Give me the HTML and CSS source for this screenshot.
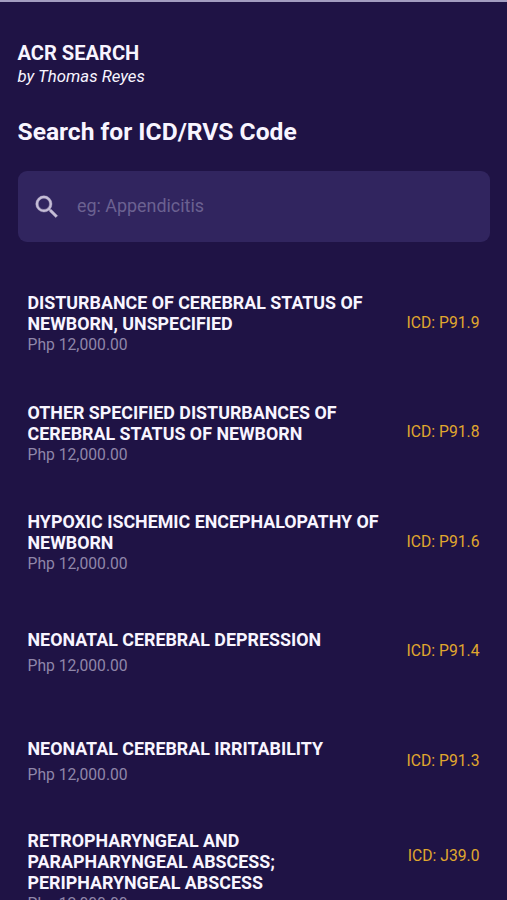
FILE: index.html
```html
<!DOCTYPE html>
<html lang="en">

<head>
    <meta charset="UTF-8" />
    <meta name="viewport" content="width=device-width, initial-scale=1" />
    <title>ACR Search</title>
    <link rel="stylesheet" href="styles.css">
</head>

<body>
    <header>
        <h1>ACR SEARCH</h1>
        <p class="author">by Thomas Reyes</p>
        <h2>Search for ICD/RVS Code</h2>
    </header>

    <form class="search-box">
        <svg class="search-icon" viewBox="0 0 24 24">
            <path d="M15.5 14h-.79l-.28-.27A6.47 6.47 0 0 0 16 9.5 6.5 6.5 0 1 0 9.5 16c1.61 0 3.09-.59 4.23-1.57l.27.28v.79l5 4.99L20.49 19l-4.99-5zm-6 0C7.01 14 5 11.99 5 9.5S7.01 5 9.5 5 14 7.01 14 9.5 11.99 14 9.5 14z" />
        </svg>
        <input type="text" name="search" placeholder="eg: Appendicitis" />
    </form>

    <ul class="results">
        <li class="item">
            <div class="info">
                <h3>DISTURBANCE OF CEREBRAL STATUS OF<br>NEWBORN, UNSPECIFIED</h3>
                <p>Php 12,000.00</p>
            </div>
            <span class="code">ICD: P91.9</span>
        </li>
        <li class="item">
            <div class="info">
                <h3>OTHER SPECIFIED DISTURBANCES OF<br>CEREBRAL STATUS OF NEWBORN</h3>
                <p>Php 12,000.00</p>
            </div>
            <span class="code">ICD: P91.8</span>
        </li>
        <li class="item">
            <div class="info">
                <h3>HYPOXIC ISCHEMIC ENCEPHALOPATHY OF<br>NEWBORN</h3>
                <p>Php 12,000.00</p>
            </div>
            <span class="code">ICD: P91.6</span>
        </li>
        <li class="item single">
            <div class="info">
                <h3>NEONATAL CEREBRAL DEPRESSION</h3>
                <p>Php 12,000.00</p>
            </div>
            <span class="code">ICD: P91.4</span>
        </li>
        <li class="item single">
            <div class="info">
                <h3>NEONATAL CEREBRAL IRRITABILITY</h3>
                <p>Php 12,000.00</p>
            </div>
            <span class="code">ICD: P91.3</span>
        </li>
        <li class="item tall">
            <div class="info">
                <h3>RETROPHARYNGEAL AND<br>PARAPHARYNGEAL ABSCESS;<br>PERIPHARYNGEAL ABSCESS</h3>
                <p>Php 12,000.00</p>
            </div>
            <span class="code">ICD: J39.0</span>
        </li>
    </ul>
</body>

</html>
```

FILE: styles.css
```css
* {
    box-sizing: border-box;
    margin: 0;
    padding: 0;
}

html {
    background-color: #1f1345;
}

body {
    height: 900px;
    overflow: hidden;
    padding: 40px 17px 0 17.5px;
    border-top: 2px solid #a39dc0;
    background-color: #1f1345;
    color: #f8f5ff;
    font-family: Roboto, sans-serif;
}

h1 {
    font-size: 20.1px;
    line-height: 23px;
    font-weight: 700;
}

.author {
    font-size: 16.8px;
    line-height: 22px;
    font-style: italic;
}

h2 {
    margin-top: 29px;
    font-size: 24.6px;
    line-height: 32px;
    font-weight: 700;
}

.search-box {
    display: flex;
    align-items: center;
    height: 71px;
    margin-top: 23px;
    padding: 0 14px;
    border-radius: 9px;
    background-color: #31255f;
}

.search-icon {
    width: 30px;
    height: 30px;
    fill: #c5bdd6;
    stroke: #c5bdd6;
    stroke-width: 0.3;
}

.search-box input {
    flex: 1;
    min-width: 0;
    margin: 0 0 3px 15.5px;
    border: none;
    outline: none;
    background: none;
    color: white;
    font-family: inherit;
    font-size: 17.9px;
}

.search-box input::placeholder {
    color: #6b6191;
}

.results {
    margin-top: 25.5px;
    list-style: none;
}

.item {
    display: flex;
    justify-content: space-between;
    align-items: center;
    height: 109.5px;
    padding: 0 10.5px 0 10px;
}

.info {
    padding-top: 3px;
}

.item h3 {
    font-size: 17.85px;
    line-height: 21px;
    font-weight: 700;
    white-space: nowrap;
}

.item p {
    color: #8f86a9;
    font-size: 15.7px;
    line-height: 21px;
}

.single p {
    margin-top: 5px;
}

/* three line titles run past the bottom of the row */
.tall {
    height: 80px;
}

.tall .info {
    align-self: flex-start;
    padding-top: 14.5px;
}

.code {
    color: #e0a82e;
    font-size: 15.7px;
    white-space: nowrap;
}
```
